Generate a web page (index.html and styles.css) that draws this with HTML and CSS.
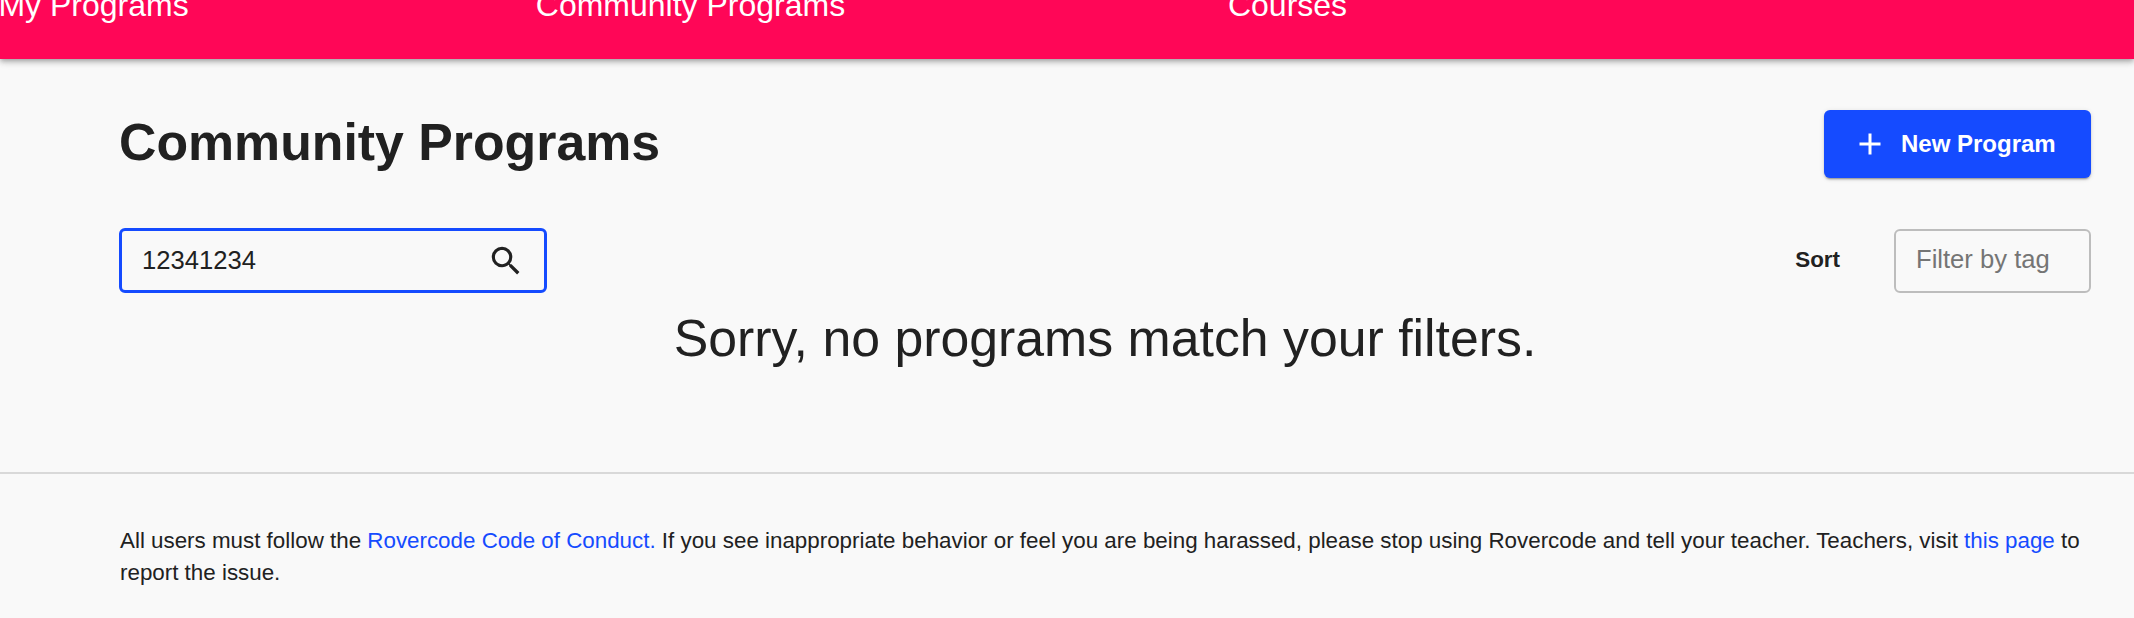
FILE: index.html
```html
<!DOCTYPE html>
<html lang="en">
<head>
  <meta charset="UTF-8">
  <meta name="viewport" content="width=device-width, initial-scale=1.0">
  <title>Community Programs</title>
  <link rel="stylesheet" href="styles.css">
</head>
<body>
  <nav class="tabs">
    <a class="tab" href="#">My Programs</a>
    <a class="tab" href="#">Community Programs</a>
    <a class="tab" href="#">Courses</a>
  </nav>

  <main class="content">
    <div class="title-row">
      <h1>Community Programs</h1>
      <button class="new-btn" type="button">
        <svg class="plus" viewBox="0 0 24 24" width="36" height="36"><path d="M19 13h-6v6h-2v-6H5v-2h6V5h2v6h6v2z" fill="#fff"/></svg>
        New Program
      </button>
    </div>

    <div class="filter-row">
      <div class="search">
        <input class="search-input" type="text" value="12341234">
        <svg viewBox="0 0 24 24" width="38" height="38"><path d="M15.5 14h-.79l-.28-.27A6.47 6.47 0 0 0 16 9.5 6.5 6.5 0 1 0 9.5 16c1.61 0 3.09-.59 4.23-1.57l.27.28v.79l5 4.99L20.49 19l-4.99-5zm-6 0C7.01 14 5 11.99 5 9.5S7.01 5 9.5 5 14 7.01 14 9.5 11.99 14 9.5 14z" fill="#212121"/></svg>
      </div>
      <div class="sort">
        <span class="sort-label">Sort</span>
        <input class="tag-input" type="text" placeholder="Filter by tag">
      </div>
    </div>

    <p class="empty">Sorry, no programs match your filters.</p>
  </main>

  <footer class="footer">
    <p>All users must follow the <a href="#">Rovercode Code of Conduct.</a> If you see inappropriate behavior or feel you are being harassed, please stop using Rovercode and tell your teacher. Teachers, visit <a href="#">this page</a> to report the issue.</p>
  </footer>
</body>
</html>
```

FILE: styles.css
```css
* {
  box-sizing: border-box;
}

html, body {
  height: 100%;
}

body {
  margin: 0;
  overflow: hidden;
  background-color: #f9f9f9;
  color: #212121;
  font-family: "Liberation Sans", Arial, sans-serif;
}

.tabs {
  display: flex;
  align-items: flex-end;
  height: 59px;
  padding-bottom: 36px;
  overflow: hidden;
  background-color: #ff0657;
  box-shadow: 0 2px 4px -1px rgba(0,0,0,.2), 0 4px 5px 0 rgba(0,0,0,.14), 0 1px 10px 0 rgba(0,0,0,.12);
}

.tab {
  flex: none;
  width: 597px;
  color: #fff;
  font-size: 32px;
  line-height: 36px;
  text-align: center;
  text-decoration: none;
}

.tab:first-child {
  margin-left: -205px;
}

.content {
  padding: 51px 43px 0 119px;
}

.title-row {
  display: flex;
  justify-content: space-between;
  align-items: center;
  height: 68px;
}

h1 {
  margin: 0 0 2px;
  font-size: 51.8px;
  font-weight: 700;
  line-height: 1;
}

.new-btn {
  display: flex;
  align-items: center;
  gap: 13px;
  width: 267px;
  height: 68px;
  padding: 0 0 0 28px;
  border: 0;
  border-radius: 6px;
  background-color: #154bff;
  box-shadow: 0 3px 1px -2px rgba(0,0,0,.2), 0 2px 2px 0 rgba(0,0,0,.14), 0 1px 5px 0 rgba(0,0,0,.12);
  color: #fff;
  font-family: inherit;
  font-size: 24px;
  font-weight: 700;
}

.filter-row {
  display: flex;
  justify-content: space-between;
  align-items: center;
  margin-top: 50px;
}

.search {
  display: flex;
  align-items: center;
  width: 428px;
  height: 65px;
  padding: 0 19px;
  border: 3px solid #154bff;
  border-radius: 6px;
}

.search-input {
  flex: 1;
  min-width: 0;
  padding: 0 0 0 1px;
  border: 0;
  outline: 0;
  background: none;
  color: #212121;
  font-family: inherit;
  font-size: 25.6px;
}

.sort {
  display: flex;
  align-items: center;
  gap: 54px;
}

.sort-label {
  margin-bottom: 2px;
  font-size: 22.4px;
  font-weight: 700;
}

.tag-input {
  width: 197px;
  height: 64px;
  padding: 0 20px 2px;
  border: 2px solid #bdbdbd;
  border-radius: 6px;
  outline: 0;
  background: none;
  font-family: inherit;
  font-size: 25.6px;
}

.tag-input::placeholder {
  color: #757575;
  opacity: 1;
}

.empty {
  margin: 13px 0 0;
  font-size: 51.8px;
  line-height: 64px;
  text-align: center;
}

.footer {
  margin-top: 102px;
  padding: 51px 43px 0 120px;
  border-top: 2px solid #d9d9d9;
  font-size: 22.37px;
  line-height: 32px;
}

.footer p {
  margin: 0;
}

.footer a {
  color: #154bff;
  text-decoration: none;
}
```
